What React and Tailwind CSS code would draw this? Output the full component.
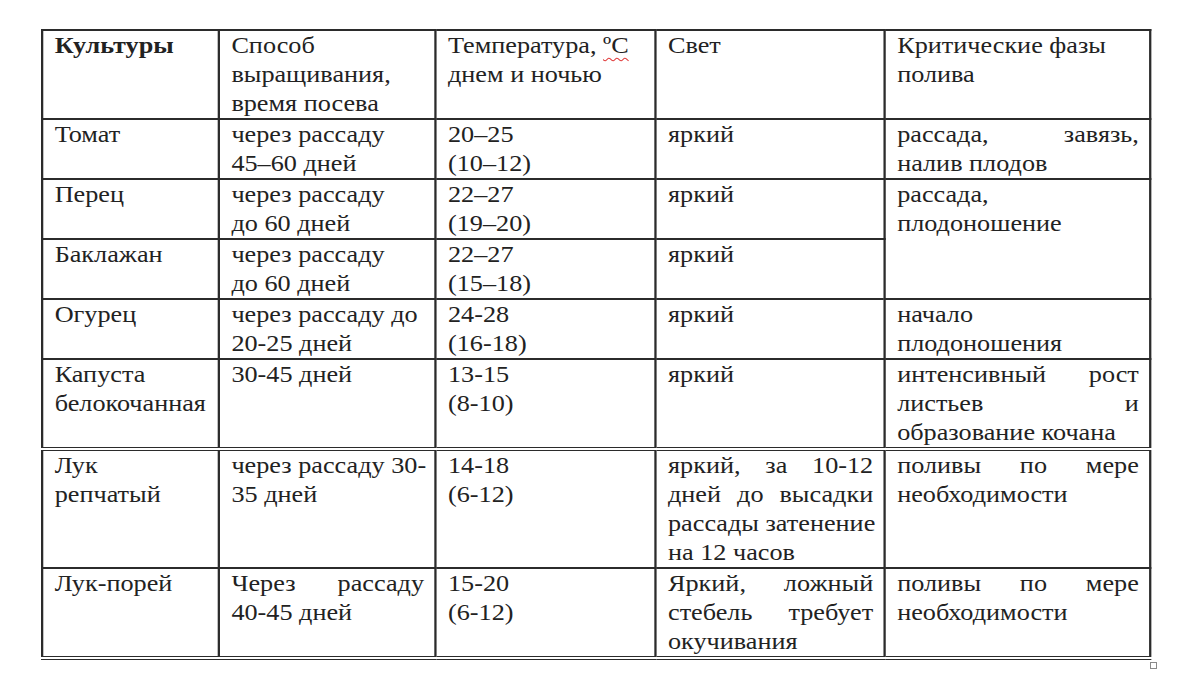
import React from "react";

// Word table screenshot, the capture is a bit stretched horizontally,
// so the table is built narrower and stretched back with scale-x.

const J = ({ children }) => (
  <div className="whitespace-nowrap text-justify [text-align-last:justify]">{children}</div>
);
const L = ({ children }) => <div className="whitespace-nowrap">{children}</div>;

const cell = "border-2 border-[#2b2b2b] align-top pl-[10px] pr-[9px] p-0";

const rows = [
  {
    name: [<L key="a">Томат</L>],
    way: [<L key="a">через рассаду</L>, <L key="b">45–60 дней</L>],
    temp: [<L key="a">20–25</L>, <L key="b">(10–12)</L>],
    light: [<L key="a">яркий</L>],
    water: [<J key="a">рассада, завязь,</J>, <L key="b">налив плодов</L>],
  },
  {
    name: [<L key="a">Перец</L>],
    way: [<L key="a">через рассаду</L>, <L key="b">до 60 дней</L>],
    temp: [<L key="a">22–27</L>, <L key="b">(19–20)</L>],
    light: [<L key="a">яркий</L>],
    water: [<L key="a">рассада,</L>, <L key="b">плодоношение</L>],
    span: 2,
  },
  {
    name: [<L key="a">Баклажан</L>],
    way: [<L key="a">через рассаду</L>, <L key="b">до 60 дней</L>],
    temp: [<L key="a">22–27</L>, <L key="b">(15–18)</L>],
    light: [<L key="a">яркий</L>],
    water: null,
  },
  {
    name: [<L key="a">Огурец</L>],
    way: [<L key="a">через рассаду до</L>, <L key="b">20-25 дней</L>],
    temp: [<L key="a">24-28</L>, <L key="b">(16-18)</L>],
    light: [<L key="a">яркий</L>],
    water: [<L key="a">начало</L>, <L key="b">плодоношения</L>],
  },
  {
    name: [<L key="a">Капуста</L>, <L key="b">белокочанная</L>],
    way: [<L key="a">30-45 дней</L>],
    temp: [<L key="a">13-15</L>, <L key="b">(8-10)</L>],
    light: [<L key="a">яркий</L>],
    water: [
      <J key="a">интенсивный рост</J>,
      <J key="b">листьев и</J>,
      <L key="c">образование кочана</L>,
    ],
    double: true,
  },
  {
    name: [<L key="a">Лук</L>, <L key="b">репчатый</L>],
    way: [<L key="a">через рассаду 30-</L>, <L key="b">35 дней</L>],
    temp: [<L key="a">14-18</L>, <L key="b">(6-12)</L>],
    light: [
      <J key="a">яркий, за 10-12</J>,
      <J key="b">дней до высадки</J>,
      <J key="c">рассады затенение</J>,
      <L key="d">на 12 часов</L>,
    ],
    water: [<J key="a">поливы по мере</J>, <L key="b">необходимости</L>],
  },
  {
    name: [<L key="a">Лук-порей</L>],
    way: [<J key="a">Через рассаду</J>, <L key="b">40-45 дней</L>],
    temp: [<L key="a">15-20</L>, <L key="b">(6-12)</L>],
    light: [
      <J key="a">Яркий, ложный</J>,
      <J key="b">стебель требует</J>,
      <L key="c">окучивания</L>,
    ],
    water: [<J key="a">поливы по мере</J>, <L key="b">необходимости</L>],
    double: true,
  },
];

export default function App() {
  return (
    <div className="relative w-[1200px] h-[675px] bg-white overflow-hidden text-[#222] [font-family:'Liberation_Serif','Times_New_Roman',serif] text-[23px] leading-[29px]">
      <div className="pt-[29px] pl-[41px]">
        <div className="origin-top-left scale-x-[1.14] w-[972px]">
          <table className="border-collapse table-fixed w-[972px]">
            <colgroup>
              <col className="w-[155px]" />
              <col className="w-[190px]" />
              <col className="w-[193px]" />
              <col className="w-[201px]" />
              <col className="w-[233px]" />
            </colgroup>
            <thead>
              <tr>
                <th className={cell + " text-left font-bold"}>
                  <L>Культуры</L>
                </th>
                <td className={cell}>
                  <L>Способ</L>
                  <L>выращивания,</L>
                  <L>время посева</L>
                </td>
                <td className={cell}>
                  <L>
                    Температура,{" "}
                    <span className="underline decoration-wavy decoration-[#e03a3a] decoration-1 underline-offset-[4px]">
                      ºС
                    </span>
                  </L>
                  <L>днем и ночью</L>
                </td>
                <td className={cell}>
                  <L>Свет</L>
                </td>
                <td className={cell}>
                  <L>Критические фазы</L>
                  <L>полива</L>
                </td>
              </tr>
            </thead>
            <tbody>
              {rows.map((r, i) => {
                const b = r.double ? " border-b-[4px] border-b-[#2b2b2b] border-double" : "";
                return (
                  <tr key={i}>
                    <td className={cell + b}>{r.name}</td>
                    <td className={cell + b}>{r.way}</td>
                    <td className={cell + b}>{r.temp}</td>
                    <td className={cell + b}>{r.light}</td>
                    {r.water && (
                      <td className={cell + b} rowSpan={r.span || 1}>
                        {r.water}
                      </td>
                    )}
                  </tr>
                );
              })}
            </tbody>
          </table>
        </div>
      </div>
      <div className="absolute left-[1150px] top-[662px] w-[7px] h-[7px] border border-[#8a8a8a] bg-white" />
    </div>
  );
}
